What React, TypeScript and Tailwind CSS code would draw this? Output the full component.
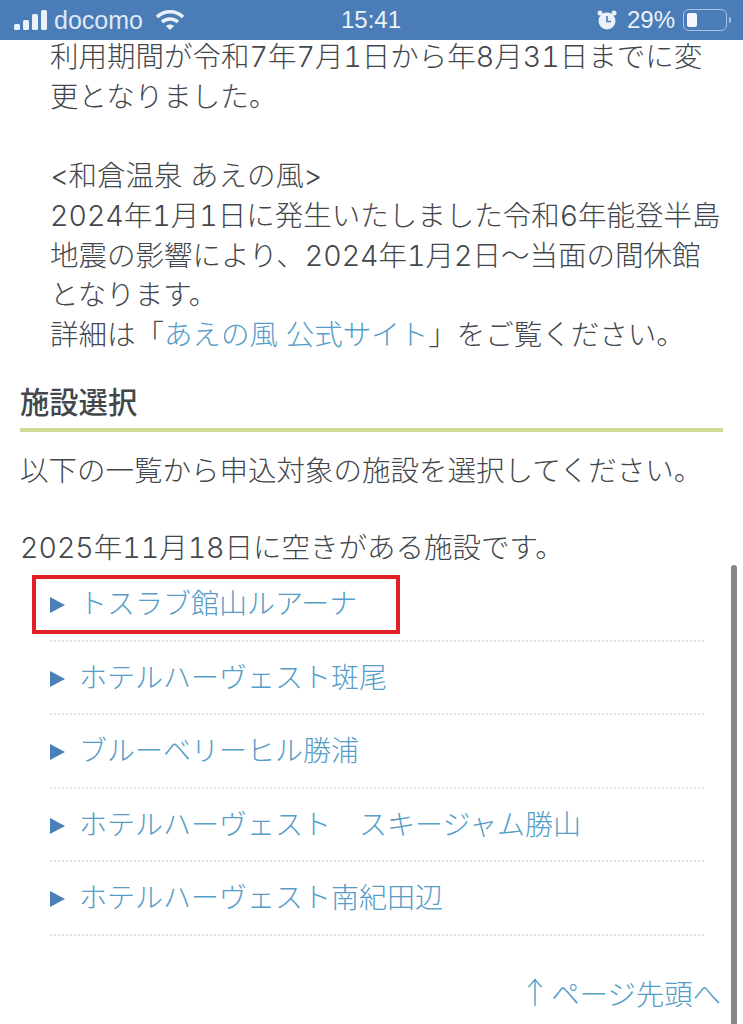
import React from "react";

const items = ["トスラブ館山ルアーナ", "ホテルハーヴェスト斑尾", "ブルーベリーヒル勝浦", "ホテルハーヴェスト　スキージャム勝山", "ホテルハーヴェスト南紀田辺"];

function StatusBar() {
  return (
    <div className="h-10 bg-[#4a7cb8] flex items-center justify-between pl-[14px] pr-[12px] text-[#eaf1f9] text-[22px] font-['Liberation_Sans',sans-serif] relative shrink-0">
      <div className="flex items-center gap-[7px]">
        <svg width="33" height="20" viewBox="0 0 33 20" fill="currentColor" aria-hidden="true">
          <rect x="0" y="14" width="6" height="6" rx="1.5" />
          <rect x="9" y="10" width="6" height="10" rx="1.5" />
          <rect x="18" y="4" width="6" height="16" rx="1.5" />
          <rect x="27" y="0" width="6" height="20" rx="1.5" />
        </svg>
        <span className="text-[#dfe9f5] text-[25px] leading-[30px]">docomo</span>
        <svg width="30" height="22" viewBox="0 0 30 22" fill="none" stroke="currentColor" strokeWidth="3.4" className="ml-[5px]" aria-hidden="true">
          <path d="M2 8 C9 1 21 1 28 8" />
          <path d="M7 13 C11 9 19 9 23 13" />
          <path d="M15 21 L11 17 C13 15 17 15 19 17 Z" fill="currentColor" stroke="none" />
        </svg>
      </div>
      <span className="absolute left-[341px] top-[6px] font-medium text-[24px] leading-[28px]">15:41</span>
      <div className="flex items-center">
        <svg width="20" height="21" viewBox="0 0 20 21" className="mr-[10px]" aria-hidden="true">
          <circle cx="10" cy="11" r="8.5" fill="currentColor" />
          <path d="M10 6 V11.5 H14" stroke="#4a7cb8" strokeWidth="1.6" fill="none" />
          <circle cx="3" cy="3" r="2.5" fill="currentColor" />
          <circle cx="17" cy="3" r="2.5" fill="currentColor" />
        </svg>
        <span className="text-[24px] leading-[30px] mr-[8px]">29%</span>
        <div className="w-[44px] h-[22px] rounded-[6px] border border-[#a9c3e2] p-[3px] flex">
          <div className="w-[10px] bg-[#f4f7fb] rounded-[2px]" />
        </div>
        <div className="w-[2px] h-[6px] ml-[2px] bg-[#a9c3e2] rounded-r" />
      </div>
    </div>
  );
}

export default function App() {
  return (
    <div className="w-[743px] h-[1024px] overflow-hidden bg-white relative font-['Inter','Noto_Sans_CJK_JP',sans-serif] font-light tabular-nums text-[#43474c] text-[28.5px] leading-[39.7px]">
      <StatusBar />
      <div className="pl-[50px] pr-[20px] -mt-[3px]">
        <p className="whitespace-nowrap">利用期間が令和7年7月1日から年8月31日までに変</p>
        <p>更となりました。</p>
        <p className="mt-[39.7px]">&lt;和倉温泉 あえの風&gt;</p>
        <p className="whitespace-nowrap">2024年1月1日に発生いたしました令和6年能登半島</p>
        <p className="whitespace-nowrap">地震の影響により、2024年1月2日～当面の間休館</p>
        <p>となります。</p>
        <p className="whitespace-nowrap">詳細は「<span className="text-[#559cc7]">あえの風 公式サイト</span>」をご覧ください。</p>
      </div>
      <div className="mx-[20px] mt-[28px]">
        <h2 className="text-[29.3px] font-medium leading-[40px] border-b-[4px] border-[#cfdb95] pb-[5px]">施設選択</h2>
        <p className="mt-[19px] whitespace-nowrap">以下の一覧から申込対象の施設を選択してください。</p>
        <p className="mt-[38px] whitespace-nowrap">2025年11月18日に空きがある施設です。</p>
      </div>
      <ul className="ml-[50px] mr-[39px] text-[#559cc7] text-[28px]">
        {items.map((t) => (
          <li key={t} className="h-[73.5px] flex items-center gap-[14px] pt-[3px] border-b-2 border-dotted border-[#e2e2e2] whitespace-pre">
            <svg width="15" height="16" viewBox="0 0 15 16" aria-hidden="true"><path d="M0 0 L15 8 L0 16 Z" fill="#4a7fb8" /></svg>
            <span>{t}</span>
          </li>
        ))}
      </ul>
      <div className="mt-[37px] pr-[22px] flex justify-end items-center gap-[8px] text-[#559cc7] text-[28.4px] font-['Noto_Sans_CJK_JP',sans-serif]">
        <svg width="16" height="28" viewBox="0 0 16 28" fill="none" stroke="currentColor" strokeWidth="1.4" aria-hidden="true">
          <path d="M8 1 V28 M1.5 9 L8 1.5 L14.5 9" />
        </svg>
        <span>ページ先頭へ</span>
      </div>
      <div className="absolute left-[32px] top-[575px] w-[368px] h-[59px] border-[4px] border-[#e01f26]" />
      <div className="absolute left-[731px] top-[565px] w-[6px] h-[459px] bg-[#888888] rounded-t-full" />
    </div>
  );
}
